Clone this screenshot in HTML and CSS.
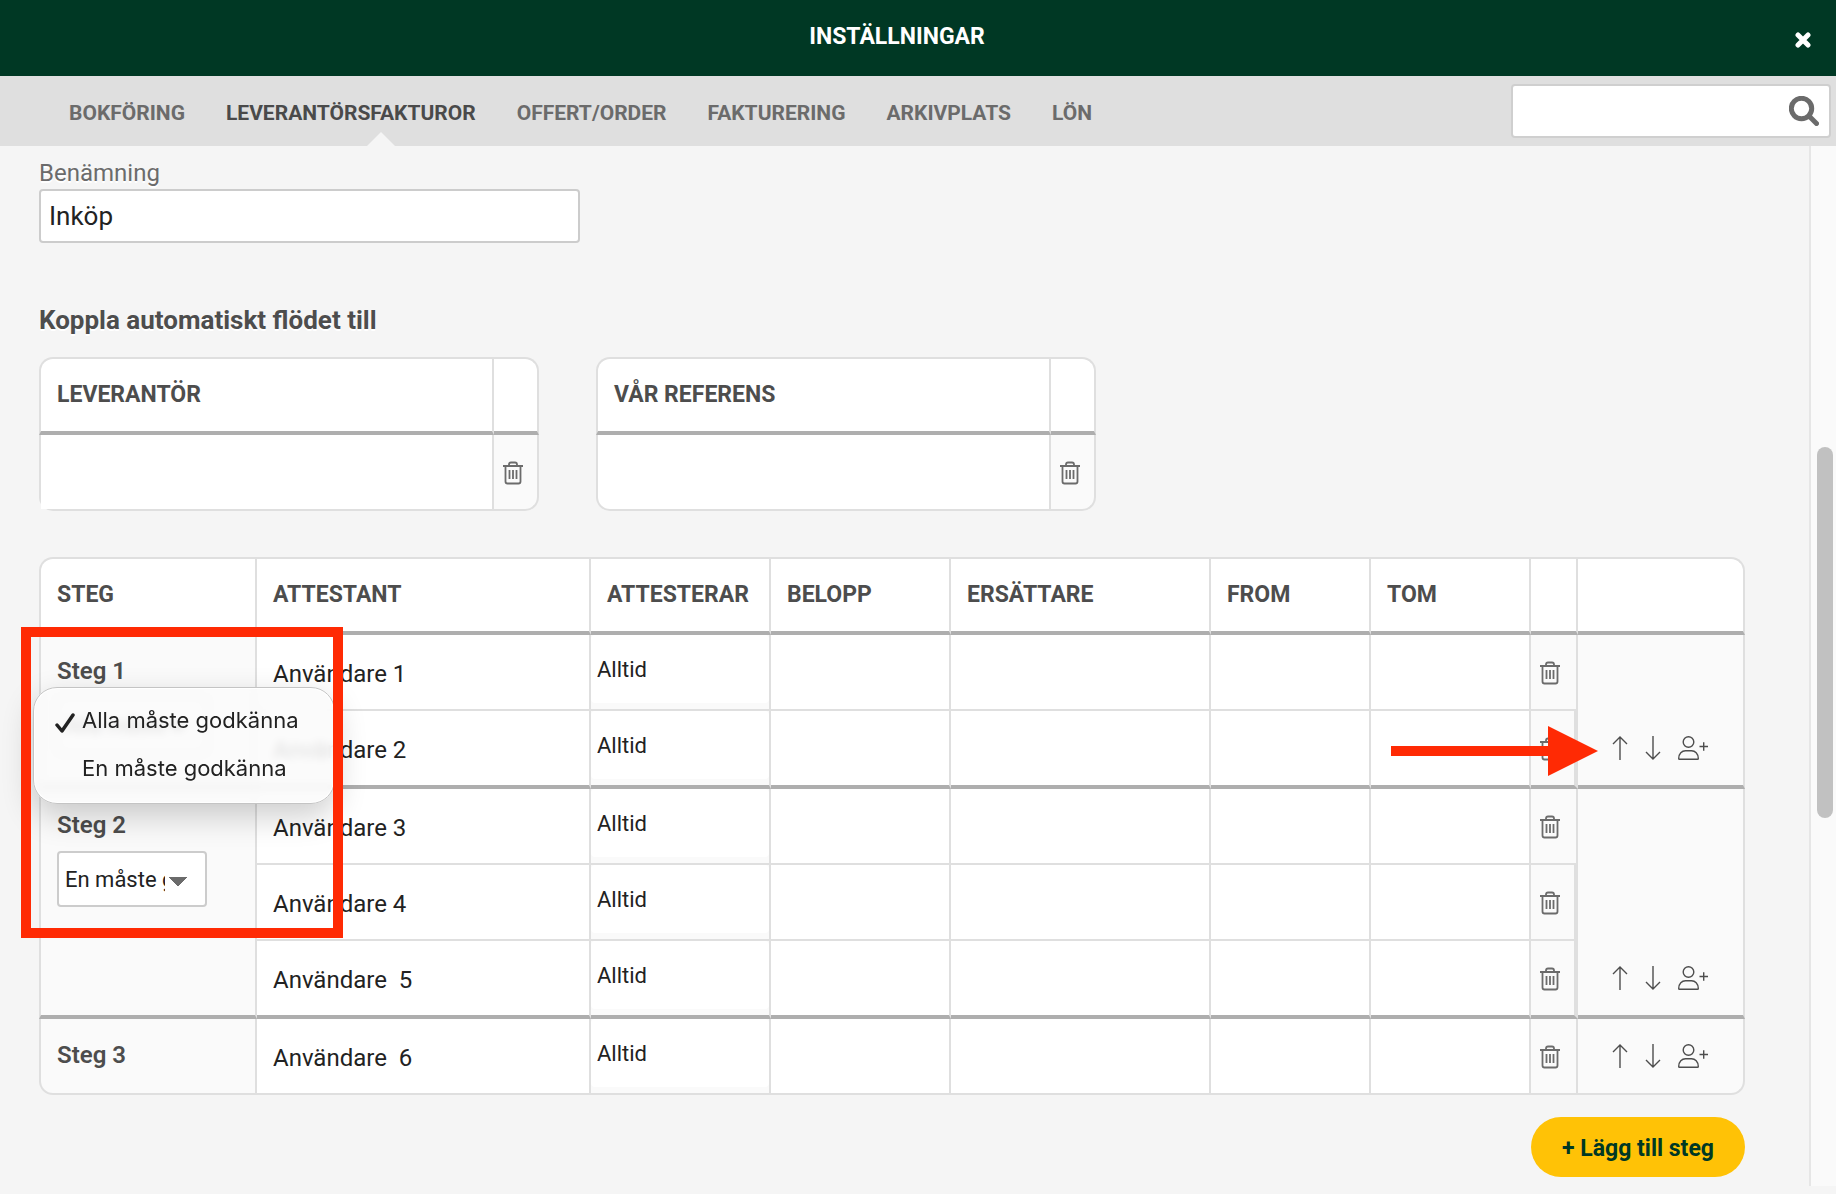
FILE: index.html
```
<!DOCTYPE html>
<html lang="sv">
<head>
    <meta charset="UTF-8">
    <title>Inställningar</title>
    <link rel="stylesheet" href="styles.css">
</head>
<body>

    <svg class="sprite" aria-hidden="true">
        <symbol id="trash" viewBox="0 0 20 24">
            <path d="M0 5h20M6 5V3.500Q6 1.500 8 1.500h4Q14 1.500 14 3.500V5M2.500 5v15.500Q2.500 22.500 4.500 22.500h11Q17.500 22.500 17.500 20.500V5M6.500 9v9M10 9v9M13.500 9v9"/>
        </symbol>
        <symbol id="up" viewBox="0 0 16 24">
            <path d="M8 24V1M1 8l7-7 7 7"/>
        </symbol>
        <symbol id="down" viewBox="0 0 16 24">
            <path d="M8 0v23M1 16l7 7 7-7"/>
        </symbol>
        <symbol id="add-user" viewBox="0 0 30 24">
            <circle cx="10.500" cy="6" r="5.300"/>
            <path d="M.7 22.500C.7 17.500 4 14.700 7.500 14.700h6c3.500 0 6.800 2.800 6.800 7.800q0 .8-.8.800h-18q-.8 0-.8-.8zM21.500 10.500H30M25.700 6.300v8.400"/>
        </symbol>
    </svg>

    <header class="header">
        <h1 class="header__title">INSTÄLLNINGAR</h1>
        <button class="header__close" type="button" aria-label="Stäng">
            <svg width="16" height="16" viewBox="0 0 16 16"><path d="M3 3l10 10M13 3L3 13"/></svg>
        </button>
    </header>

    <nav class="nav">
        <a class="nav__link" href="#">BOKFÖRING</a>
        <a class="nav__link nav__link--current" href="#">LEVERANTÖRSFAKTUROR</a>
        <a class="nav__link" href="#">OFFERT/ORDER</a>
        <a class="nav__link" href="#">FAKTURERING</a>
        <a class="nav__link" href="#">ARKIVPLATS</a>
        <a class="nav__link" href="#">LÖN</a>
        <div class="search">
            <input class="search__input" type="text" aria-label="Sök">
            <svg class="search__icon" width="30" height="30" viewBox="0 0 30 30"><circle cx="12.500" cy="12.500" r="10.200"/><path d="M20.500 20.500l7 7"/></svg>
        </div>
    </nav>

    <div class="page">
        <main class="content">
            <div class="field">
                <label class="field__label" for="name">Benämning</label>
                <input class="field__input" type="text" id="name" value="Inköp">
            </div>

            <h2 class="subtitle">Koppla automatiskt flödet till</h2>

            <div class="links">
                <table class="grid grid--link">
                    <colgroup><col><col class="col-link-del"></colgroup>
                    <tr><th>LEVERANTÖR</th><th></th></tr>
                    <tr>
                        <td><input class="cell-input" type="text" aria-label="Leverantör"></td>
                        <td class="muted"><button class="icon-btn" type="button" aria-label="Ta bort"><svg width="20" height="24"><use href="#trash"/></svg></button></td>
                    </tr>
                </table>
                <table class="grid grid--link">
                    <colgroup><col><col class="col-link-del"></colgroup>
                    <tr><th>VÅR REFERENS</th><th></th></tr>
                    <tr>
                        <td></td>
                        <td class="muted"><button class="icon-btn" type="button" aria-label="Ta bort"><svg width="20" height="24"><use href="#trash"/></svg></button></td>
                    </tr>
                </table>
            </div>

            <div class="flow">
                <table class="grid">
                    <colgroup>
                        <col class="col-step">
                        <col>
                        <col class="col-amount">
                        <col class="col-amount">
                        <col class="col-deputy">
                        <col class="col-date">
                        <col class="col-date">
                        <col class="col-del">
                        <col class="col-actions">
                    </colgroup>
                    <thead>
                        <tr>
                            <th>STEG</th>
                            <th>ATTESTANT</th>
                            <th>ATTESTERAR</th>
                            <th>BELOPP</th>
                            <th>ERSÄTTARE</th>
                            <th>FROM</th>
                            <th>TOM</th>
                            <th></th>
                            <th></th>
                        </tr>
                    </thead>
                    <tbody>
                        <tr>
                            <td class="step" rowspan="2">
                                <div class="step__name">Steg 1</div>
                                <select class="step__select" aria-label="Steg 1"><option>Alla måste godkänna</option></select>
                                <div class="menu">
                                    <button class="menu__item" type="button"><svg class="menu__check" width="20" height="20" viewBox="0 0 20 20"><path d="M2 12l5 6L18 2"/></svg>Alla måste godkänna</button>
                                    <button class="menu__item" type="button">En måste godkänna</button>
                                </div>
                            </td>
                            <td><input class="cell-input" type="text" aria-label="Attestant" value="Användare 1"></td>
                            <td class="muted"><select class="cell-select" aria-label="Attesterar"><option>Alltid</option></select></td>
                            <td></td><td></td><td></td><td></td>
                            <td class="muted"><button class="icon-btn" type="button" aria-label="Ta bort"><svg width="20" height="24"><use href="#trash"/></svg></button></td>
                            <td class="actions" rowspan="2">
                                <div class="actions__row">
                                    <button class="icon-btn" type="button" aria-label="Flytta upp"><svg width="16" height="24"><use href="#up"/></svg></button>
                                    <button class="icon-btn" type="button" aria-label="Flytta ner"><svg width="16" height="24"><use href="#down"/></svg></button>
                                    <button class="icon-btn" type="button" aria-label="Lägg till attestant"><svg width="30" height="24"><use href="#add-user"/></svg></button>
                                </div>
                            </td>
                        </tr>
                        <tr class="last">
                            <td><input class="cell-input" type="text" aria-label="Attestant" value="Användare 2"></td>
                            <td class="muted"><select class="cell-select" aria-label="Attesterar"><option>Alltid</option></select></td>
                            <td></td><td></td><td></td><td></td>
                            <td class="muted inner"><button class="icon-btn" type="button" aria-label="Ta bort"><svg width="20" height="24"><use href="#trash"/></svg></button></td>
                        </tr>
                    </tbody>
                    <tbody>
                        <tr>
                            <td class="step" rowspan="3">
                                <div class="step__name">Steg 2</div>
                                <select class="step__select" aria-label="Steg 2"><option>En måste godkänna</option></select>
                            </td>
                            <td><input class="cell-input" type="text" aria-label="Attestant" value="Användare 3"></td>
                            <td class="muted"><select class="cell-select" aria-label="Attesterar"><option>Alltid</option></select></td>
                            <td></td><td></td><td></td><td></td>
                            <td class="muted"><button class="icon-btn" type="button" aria-label="Ta bort"><svg width="20" height="24"><use href="#trash"/></svg></button></td>
                            <td class="actions" rowspan="3">
                                <div class="actions__row">
                                    <button class="icon-btn" type="button" aria-label="Flytta upp"><svg width="16" height="24"><use href="#up"/></svg></button>
                                    <button class="icon-btn" type="button" aria-label="Flytta ner"><svg width="16" height="24"><use href="#down"/></svg></button>
                                    <button class="icon-btn" type="button" aria-label="Lägg till attestant"><svg width="30" height="24"><use href="#add-user"/></svg></button>
                                </div>
                            </td>
                        </tr>
                        <tr>
                            <td><input class="cell-input" type="text" aria-label="Attestant" value="Användare 4"></td>
                            <td class="muted"><select class="cell-select" aria-label="Attesterar"><option>Alltid</option></select></td>
                            <td></td><td></td><td></td><td></td>
                            <td class="muted inner"><button class="icon-btn" type="button" aria-label="Ta bort"><svg width="20" height="24"><use href="#trash"/></svg></button></td>
                        </tr>
                        <tr class="last">
                            <td><input class="cell-input" type="text" aria-label="Attestant" value="Användare  5"></td>
                            <td class="muted"><select class="cell-select" aria-label="Attesterar"><option>Alltid</option></select></td>
                            <td></td><td></td><td></td><td></td>
                            <td class="muted inner"><button class="icon-btn" type="button" aria-label="Ta bort"><svg width="20" height="24"><use href="#trash"/></svg></button></td>
                        </tr>
                    </tbody>
                    <tbody>
                        <tr>
                            <td class="step"><div class="step__name">Steg 3</div></td>
                            <td><input class="cell-input" type="text" aria-label="Attestant" value="Användare  6"></td>
                            <td class="muted"><select class="cell-select" aria-label="Attesterar"><option>Alltid</option></select></td>
                            <td></td><td></td><td></td><td></td>
                            <td class="muted"><button class="icon-btn" type="button" aria-label="Ta bort"><svg width="20" height="24"><use href="#trash"/></svg></button></td>
                            <td class="actions">
                                <div class="actions__row">
                                    <button class="icon-btn" type="button" aria-label="Flytta upp"><svg width="16" height="24"><use href="#up"/></svg></button>
                                    <button class="icon-btn" type="button" aria-label="Flytta ner"><svg width="16" height="24"><use href="#down"/></svg></button>
                                    <button class="icon-btn" type="button" aria-label="Lägg till attestant"><svg width="30" height="24"><use href="#add-user"/></svg></button>
                                </div>
                            </td>
                        </tr>
                    </tbody>
                </table>

                <!-- Markers over the table -->
                <div class="mark-box"></div>
                <svg class="mark-arrow" width="208" height="50" viewBox="0 0 208 50"><path d="M0 20h157V0l50 25-50 25V30H0z"/></svg>
            </div>

            <div class="footer">
                <button class="add-btn" type="button">+ Lägg till steg</button>
            </div>
        </main>

        <div class="scroll"><div class="scroll__thumb"></div></div>
    </div>

</body>
</html>
```
FILE: styles.css
```
* {
    box-sizing: border-box;
    }
BODY {
    display: flex;
    flex-direction: column;
    min-height: 100vh;
    margin: 0;
    background: #F5F5F5;
    font: 22px/30px Roboto, "Liberation Sans", sans-serif;
    color: #222;
    }
BUTTON,
INPUT,
SELECT {
    margin: 0;
    padding: 0;
    border: 0;
    background: none;
    font: inherit;
    color: inherit;
    }
SELECT {
    appearance: none;
    }
SVG {
    display: block;
    fill: none;
    }
.sprite {
    position: absolute;
    width: 0;
    height: 0;
    }

/* Header */
.header {
    position: relative;
    height: 76px;
    padding-top: 22px;
    background: #003824;
    color: #FFF;
    }
.header__title {
    margin: 0;
    padding-right: 42px;
    text-align: center;
    font-size: 23px;
    font-weight: bold;
    }
.header__close {
    position: absolute;
    top: 32px;
    right: 25px;
    }
    .header__close svg {
        stroke: #FFF;
        stroke-width: 5;
        stroke-linecap: round;
        }

/* Navigation */
.nav {
    display: flex;
    gap: 41px;
    height: 70px;
    padding: 8px 5px 8px 69px;
    background: #DFDFDF;
    }
.nav__link {
    position: relative;
    font-size: 21px;
    font-weight: bold;
    line-height: 58px;
    text-decoration: none;
    color: #6B6B6B;
    }
.nav__link--current {
    color: #4A4A4A;
    }
    .nav__link--current:after {
        content: "";
        position: absolute;
        top: 48px;
        left: 62%;
        margin-left: -14px;
        border: 14px solid transparent;
        border-top: 0;
        border-bottom-color: #F5F5F5;
        }
.search {
    position: relative;
    width: 320px;
    margin-left: auto;
    }
.search__input {
    width: 100%;
    height: 54px;
    padding: 0 48px 0 8px;
    border: 2px solid #CFCFCF;
    border-radius: 4px;
    background: #FFF;
    }
.search__icon {
    position: absolute;
    top: 12px;
    right: 12px;
    stroke: #6B6B6B;
    stroke-width: 5;
    stroke-linecap: round;
    }

/* Content */
.page {
    display: flex;
    flex: 1;
    }
.content {
    flex: 1;
    padding: 11px 64px 16px 39px;
    }
.field {
    width: 541px;
    }
.field__label {
    display: block;
    height: 32px;
    font-size: 24px;
    line-height: 32px;
    color: #6B6B6B;
    text-shadow: 0 2px 0 #FFF;
    }
.field__input {
    display: block;
    width: 100%;
    height: 54px;
    padding: 0 8px;
    border: 2px solid #CCC;
    border-radius: 4px;
    background: #FFF;
    font-size: 26px;
    }
.subtitle {
    margin: 62px 0 22px;
    font-size: 26px;
    line-height: 30px;
    color: #4D4D4D;
    text-shadow: 0 2px 0 #FFF;
    }
.links {
    display: flex;
    gap: 57px;
    margin-bottom: 46px;
    }

/* Tables */
.grid {
    width: 100%;
    table-layout: fixed;
    border-spacing: 0;
    }
.grid--link {
    width: 500px;
    }
TH,
TD {
    height: 76px;
    padding: 0;
    border: solid #DFDFDF;
    border-width: 0 2px 2px 0;
    background: #FFF;
    }
TH {
    height: 78px;
    padding-left: 16px;
    border-top-width: 2px;
    border-bottom: 4px solid #AEAEAE;
    text-align: left;
    font-size: 23px;
    color: #4D4D4D;
    }
TH:first-child,
.grid--link TD:first-child,
.step {
    border-left-width: 2px;
    }
TH:first-child {
    border-top-left-radius: 14px;
    }
TH:last-child {
    border-top-right-radius: 14px;
    }
.grid--link TD:first-child,
TBODY:last-child TR:last-child .step {
    border-bottom-left-radius: 14px;
    }
.grid--link TD:last-child,
TBODY:last-child TR:last-child .actions {
    border-bottom-right-radius: 14px;
    }
.last TD,
.step[rowspan],
.actions[rowspan] {
    height: 78px;
    border-bottom: 4px solid #AEAEAE;
    }
.muted,
.step,
.actions {
    background: #FAFAFA;
    }
.inner {
    border-right-width: 4px;
    }
.col-link-del {
    width: 45px;
    }
.col-step {
    width: 218px;
    }
.col-amount {
    width: 180px;
    }
.col-deputy {
    width: 260px;
    }
.col-date {
    width: 160px;
    }
.col-del {
    width: 47px;
    }
.col-actions {
    width: 167px;
    }
.cell-input {
    display: block;
    width: 100%;
    height: 74px;
    padding: 4px 16px 0;
    background: #FFF;
    font-size: 24px;
    }
.cell-select {
    display: block;
    width: 100%;
    height: 68px;
    margin-bottom: 6px;
    padding: 2px 0 0 6px;
    border-radius: 4px;
    background: #FFF;
    }
.icon-btn {
    display: block;
    }
    .icon-btn svg {
        stroke: #4D4D4D;
        stroke-width: 1.4;
        }
    .muted .icon-btn {
        margin: 2px 0 0 9px;
        }
    .muted .icon-btn svg {
        stroke: #6B6B6B;
        stroke-width: 1.8;
        }

/* Steps */
.flow {
    position: relative;
    }
.step {
    position: relative;
    padding: 21px 0 0 16px;
    vertical-align: top;
    }
.step__name {
    font-size: 24px;
    font-weight: 600;
    color: #4D4D4D;
    }
.step__select {
    display: block;
    width: 150px;
    height: 56px;
    margin-top: 11px;
    padding: 2px 40px 0 6px;
    border: 2px solid #CCC;
    border-radius: 4px;
    background: linear-gradient(to bottom left, #6B6B6B 50%, transparent 50%) 110px 24px / 9px 10px no-repeat,
        linear-gradient(to bottom right, #6B6B6B 50%, transparent 50%) 119px 24px / 9px 10px no-repeat,
        #FFF;
    text-overflow: clip;
    }
.actions {
    vertical-align: bottom;
    }
.actions__row {
    display: flex;
    align-items: center;
    gap: 17px;
    height: 74px;
    padding-left: 34px;
    }

/* Open drop-down */
.menu {
    position: absolute;
    z-index: 1;
    top: 52px;
    left: -8px;
    width: 302px;
    padding: 8px 0 11px;
    border: 1px solid #C4C4C4;
    border-radius: 24px;
    background: rgba(250, 250, 250, .87);
    box-shadow: inset 0 0 0 1px #FFF, 0 12px 32px rgba(0, 0, 0, .2);
    backdrop-filter: blur(4px);
    }
.menu__item {
    position: relative;
    display: block;
    width: 100%;
    padding-left: 48px;
    font: 22px/48px Inter, Roboto, sans-serif;
    text-align: left;
    }
.menu__check {
    position: absolute;
    top: 17px;
    left: 21px;
    stroke: #222;
    stroke-width: 3.5;
    stroke-linecap: round;
    stroke-linejoin: round;
    }

/* Markers */
.mark-box {
    position: absolute;
    z-index: 2;
    top: 70px;
    left: -18px;
    width: 322px;
    height: 311px;
    border: 10px solid #FF2A04;
    }
.mark-arrow {
    position: absolute;
    top: 169px;
    right: 146px;
    fill: #FF2A04;
    }

.footer {
    display: flex;
    justify-content: flex-end;
    margin-top: 22px;
    }
.add-btn {
    width: 214px;
    height: 60px;
    padding-top: 3px;
    border-radius: 30px;
    background: #FFC206;
    font-size: 23px;
    font-weight: bold;
    color: #003824;
    }

/* Scrollbar */
.scroll {
    width: 27px;
    margin-bottom: 8px;
    padding: 301px 3px 0 6px;
    border-left: 2px solid #E6E6E6;
    background: #FAFAFA;
    }
.scroll__thumb {
    width: 16px;
    height: 371px;
    border-radius: 8px;
    background: #C1C1C1;
    }
```
